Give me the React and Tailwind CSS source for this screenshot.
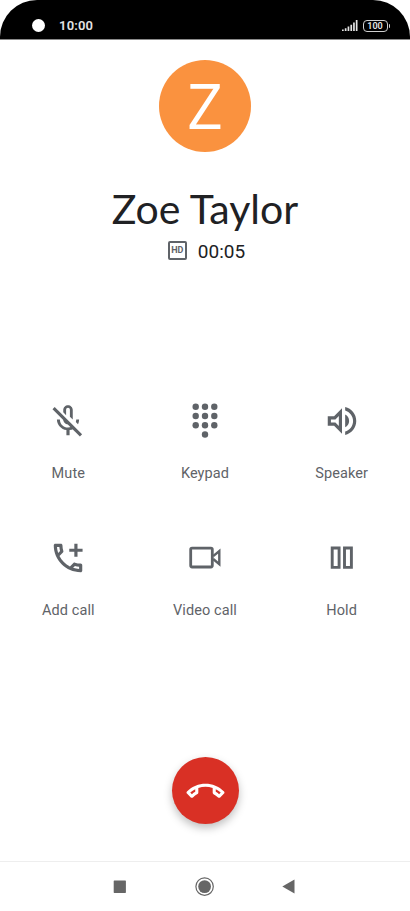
const CALL_PATH =
  "M6.54 5c.06.89.21 1.76.45 2.59l-1.2 1.2c-.41-1.2-.67-2.47-.76-3.79h1.51m9.86 12.02c.85.24 1.72.39 2.6.45v1.49c-1.32-.09-2.59-.35-3.8-.75l1.2-1.19M7.5 3H4c-.55 0-1 .45-1 1 0 9.39 7.61 17 17 17 .55 0 1-.45 1-1v-3.49c0-.55-.45-1-1-1-1.24 0-2.45-.2-3.57-.57-.1-.04-.21-.05-.31-.05-.26 0-.51.1-.71.29l-2.2 2.2c-2.83-1.45-5.15-3.76-6.59-6.59l2.2-2.2c.28-.28.36-.67.25-1.02C8.7 6.45 8.5 5.25 8.5 4c0-.55-.45-1-1-1z";

const Icon = ({ children, className = "size-[38px]" }) => (
  <svg viewBox="0 0 24 24" fill="currentColor" className={className}>
    {children}
  </svg>
);

const MuteIcon = () => (
  <Icon>
    <path d="M10.8 8.3V4.9c0-.66.54-1.2 1.2-1.2s1.2.54 1.2 1.2V9.3L15 11.1V5c0-1.66-1.34-3-3-3S9 3.34 9 5v1.5zM19 11h-1.8c0 .58-.1 1.13-.27 1.64l1.37 1.4c.44-.88.7-1.97.7-3.04z" />
    <path d="M9 10.4V11c0 1.66 1.34 3 3 3l.65-.08 1.66 1.66c-.71.33-1.5.52-2.31.52-2.76 0-5.1-2.1-5.1-5.1H5c0 3.41 2.72 6.23 6 6.72V21h2v-3.28c.91-.13 1.77-.45 2.55-.9z" />
    <path d="M3.6 3.2L2.2 4.6l17.3 17.2 1.4-1.4z" />
  </Icon>
);

const KeypadIcon = () => (
  <svg viewBox="0 0 38 38" fill="currentColor" className="size-[38px]">
    {[4.7, 14, 23.3].map((y) =>
      [9.7, 19, 28.3].map((x) => <circle key={`${x}-${y}`} cx={x} cy={y} r="3.2" />)
    )}
    <circle cx="19" cy="32.5" r="3.2" />
  </svg>
);

const SpeakerIcon = () => (
  <Icon>
    <path d="M3 9v6h4l5 5V4L7 9H3zm7-.17v6.34L7.83 13H5v-2h2.83L10 8.83zM16.5 12c0-1.77-1.02-3.29-2.5-4.03v8.05c1.48-.73 2.5-2.25 2.5-4.02zM14 3.23v2.06c2.89.86 5 3.54 5 6.71s-2.11 5.85-5 6.71v2.06c4.01-.91 7-4.49 7-8.77s-2.99-7.86-7-8.77z" />
  </Icon>
);

const AddCallIcon = () => (
  <Icon>
    <path d={CALL_PATH} />
    <path d="M16 3h2v3.1h3.2v2H18v3.1h-2V8.1h-3.2v-2H16z" />
  </Icon>
);

const VideoIcon = () => (
  <svg viewBox="0 0 38 38" fill="none" stroke="currentColor" className="size-[38px]">
    <rect x="4.7" y="9.2" width="21.6" height="18.8" rx="1.4" strokeWidth="2.8" />
    <path d="M27.2 17.2l6.1-5.2v13.2l-6.1-5.2" strokeWidth="2.4" />
  </svg>
);

const HoldIcon = () => (
  <svg viewBox="0 0 38 38" fill="none" stroke="currentColor" strokeWidth="2.9" className="size-[38px]">
    <path d="M9.2 9h6.9v19.4H9.2zM21.5 9h6.9v19.4h-6.9z" />
  </svg>
);

const actions = [
  { label: "Mute", icon: <MuteIcon /> },
  { label: "Keypad", icon: <KeypadIcon /> },
  { label: "Speaker", icon: <SpeakerIcon /> },
  { label: "Add call", icon: <AddCallIcon /> },
  { label: "Video call", icon: <VideoIcon /> },
  { label: "Hold", icon: <HoldIcon /> },
];

const StatusBar = () => (
  <div className="flex h-10 items-center rounded-t-[37px] border-b border-[#8a8a8a] bg-black pt-3 pr-[20px] pl-8 text-[#e4e4e4]">
    <div className="size-[13px] rounded-full bg-white" />
    <span className="ml-3.5 text-[13px] leading-none font-semibold tracking-[0.2px]">10:00</span>
    <svg viewBox="0 0 16 12" className="ml-auto h-3 w-4" fill="currentColor">
      <path d="M0 9.5h1.7V11H0zM2.8 8.3h1.7V11H2.8zM5.6 6.6h1.7V11H5.6zM8.4 4.7h1.7V11H8.4zM11.1 2.5h1.7V11h-1.7zM13.8 0h1.7v11h-1.7z" />
    </svg>
    <div className="ml-[5px] flex h-3 w-[25px] items-center justify-center rounded-[4px] border-[1.5px] border-[#d0d0d0] pt-px text-[9px] leading-none font-semibold">
      100
    </div>
    <div className="ml-px h-1 w-[1.5px] rounded-r bg-[#d0d0d0]" />
  </div>
);

const NavBar = () => (
  <div className="flex h-[50px] items-center justify-center border-t border-[#eeeeee] pr-0.5 text-[#666666]">
    <svg viewBox="0 0 20 20" fill="currentColor" className="size-5">
      <rect x="3.7" y="3.5" width="12.2" height="12.4" rx="0.6" />
    </svg>
    <svg viewBox="0 0 20 20" fill="currentColor" className="mx-16 size-5">
      <circle cx="10.6" cy="9.6" r="6.4" />
      <circle cx="10.6" cy="9.6" r="8.7" fill="none" stroke="currentColor" strokeWidth="1.2" />
    </svg>
    <svg viewBox="0 0 20 20" fill="currentColor" className="size-5">
      <path d="M16.5 2.6v14L4.3 9.6z" />
    </svg>
  </div>
);

export default function App() {
  return (
    <div className="flex h-[911px] w-[410px] flex-col overflow-hidden bg-white font-['Roboto',sans-serif] text-[#202124]">
      <StatusBar />

      {/* Caller */}
      <div className="flex flex-col items-center pt-5">
        <div className="flex size-[92px] items-center justify-center rounded-full bg-[#fa923f] pb-0.5 font-['Open_Sans',sans-serif] text-[62px] leading-none text-white">
          Z
        </div>
        <h1 className="mt-[33px] font-['Lato',sans-serif] text-[41px] leading-[48px] whitespace-nowrap">
          Zoe Taylor
        </h1>
        <div className="mt-1.5 flex h-6 items-center gap-[11px] pl-[3px]">
          <div className="mb-px flex size-[19px] items-center justify-center rounded-[2px] border-2 border-[#5f6368] text-[9px] leading-none font-bold text-[#5f6368]">
            HD
          </div>
          <span className="pt-px text-[19px] leading-6">00:05</span>
        </div>
      </div>

      {/* Call controls */}
      <div className="mt-[139px] grid grid-cols-3 gap-y-[55px] text-[#5f6368]">
        {actions.map(({ label, icon }) => (
          <button key={label} className="flex h-[82px] flex-col items-center gap-6">
            {icon}
            <span className="text-[14.5px] leading-5 tracking-[0.1px]">{label}</span>
          </button>
        ))}
      </div>

      <div className="mt-auto mb-[37px] flex justify-center">
        <button className="flex size-[67px] items-center justify-center rounded-full bg-[#d93025] pt-[3px] text-white shadow-[0_4px_8px_rgba(0,0,0,0.25)]">
          <Icon className="size-[37px] rotate-[135deg]">
            <path d={CALL_PATH} />
          </Icon>
        </button>
      </div>

      <NavBar />
    </div>
  );
}
